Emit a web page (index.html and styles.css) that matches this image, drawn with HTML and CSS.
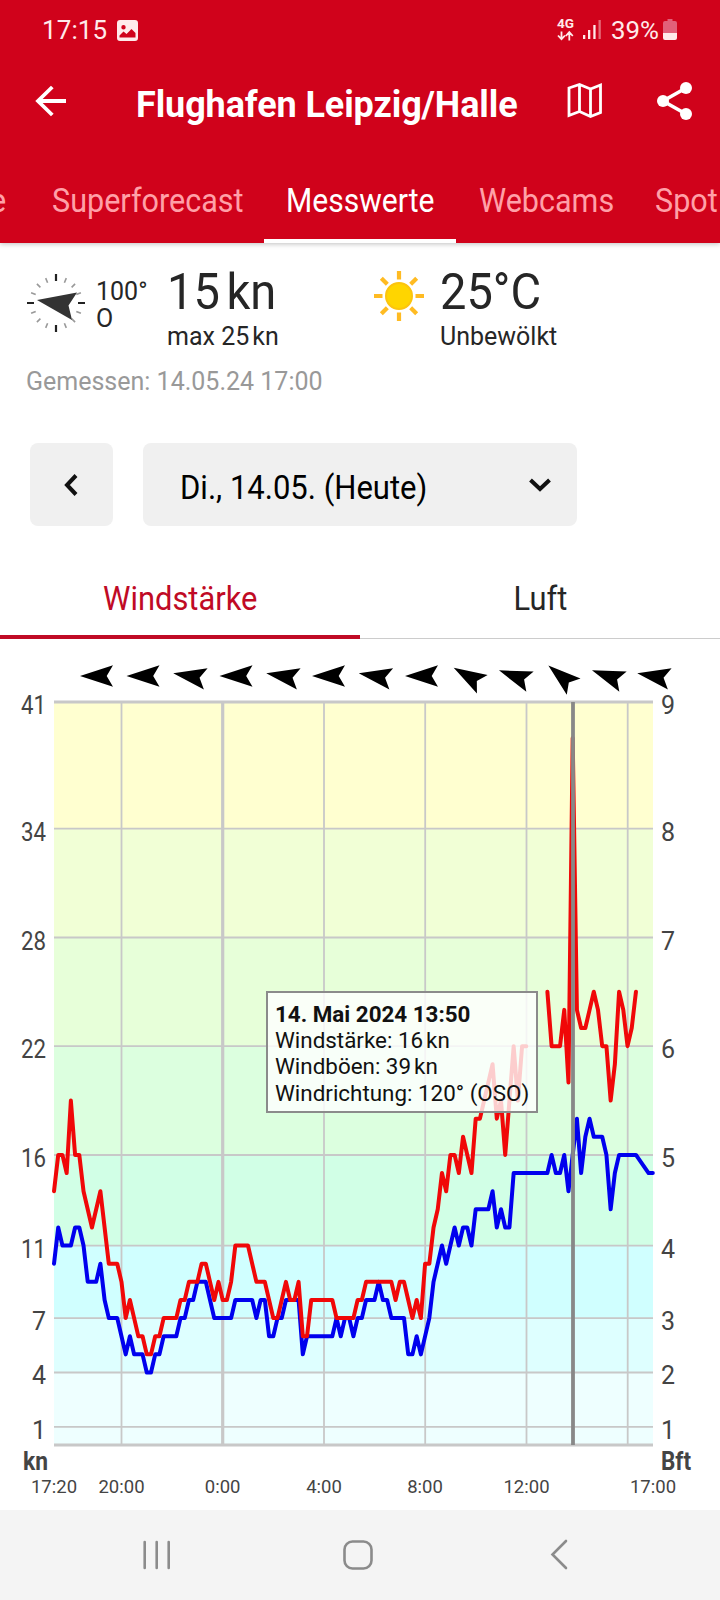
FILE: index.html
```html
<!DOCTYPE html>
<html lang="de">
<head>
<meta charset="utf-8">
<title>Flughafen Leipzig/Halle</title>
<link rel="stylesheet" href="styles.css">
</head>
<body>
<header class="header">
  <div class="status">
    <span class="clock">17:15</span>
    <svg class="photo" width="21" height="21" viewBox="0 0 21 21"><path fill="#ffeaea" fill-rule="evenodd" d="M3 0H18Q21 0 21 3V18Q21 21 18 21H3Q0 21 0 18V3Q0 0 3 0ZM6.500 5A2.200 2.200 0 1 0 6.500 9.400A2.200 2.200 0 1 0 6.500 5ZM2.500 17.500H18.500V13L14.500 9L9.500 14L6.500 11.500L2.500 15.500Z"/></svg>
    <svg class="signal" width="122" height="24" viewBox="0 0 122 24">
      <text class="net" x="0" y="9" textLength="17" lengthAdjust="spacingAndGlyphs">4G</text>
      <g fill="none" stroke="#ffeaea" stroke-width="1.800"><path d="M4.500 12.500V20M1 16.500L4.500 20.200L8 16.500M12.300 21.500V13.500M8.800 17L12.300 13.200L15.800 17"/></g>
      <g fill="#ffeaea"><rect x="26" y="16" width="2.300" height="4"/><rect x="31" y="11" width="2.300" height="9"/><rect x="36.300" y="6" width="2.300" height="14"/><rect x="41.500" y="1" width="2.300" height="19" opacity=".45"/></g>
      <text class="pct" x="54" y="19.500" textLength="48" lengthAdjust="spacingAndGlyphs">39%</text>
      <path fill="#e2607a" d="M110.500 0H115.500V2H118Q120 2 120 4V14H106V4Q106 2 108 2H110.500Z"/><path fill="#ffeaea" d="M106 14H120V19Q120 21 118 21H108Q106 21 106 19Z"/>
    </svg>
  </div>
  <div class="bar">
    <svg class="back" width="32" height="32" viewBox="0 0 32 32"><path d="M31 16H3M17.300 2L3 16L17.300 30" fill="none" stroke="#fff" stroke-width="3.800"/></svg>
    <h1 class="title">Flughafen Leipzig/Halle</h1>
    <svg class="map" width="36" height="36" viewBox="0 0 36 36"><path d="M2 5L12.500 1.500L23.500 6L33.500 2V29.500L23.500 33.500L12.500 28.500L2 32.500ZM12.500 1.500V28.500M23.500 6V33.500" fill="none" stroke="#fff" stroke-width="2.800"/></svg>
    <svg class="share" width="36" height="40" viewBox="0 0 36 40"><path d="M29 7L6 20L29 33" fill="none" stroke="#fff" stroke-width="3.600"/><g fill="#fff"><circle cx="29" cy="7" r="6"/><circle cx="6" cy="20" r="6"/><circle cx="29" cy="33" r="6"/></g></svg>
  </div>
  <nav class="tabs">
    <span class="tab cut">e</span><span class="tab super"><span class="narrow">Superforecast</span></span><span class="tab active"><span class="narrow mid">Messwerte</span></span><span class="tab cams"><span class="narrow">Webcams</span></span><span class="tab spot"><span class="narrow">Spot</span></span>
  </nav>
</header>
<main>
  <section class="current">
    <svg class="compass" width="58" height="60" viewBox="-29 -30 58 60">
      <g stroke="#222" stroke-width="2.200"><path d="M0-29V-22M0 22V29M-29 0H-22M22 0H29"/></g>
      <g stroke="#999" stroke-width="1.600"><path id="ticks" d="M8.400-20.300L10.300-24.900M15.600-15.600L19.100-19.100M20.300-8.400L24.900-10.300"/><use href="#ticks" transform="rotate(90)"/><use href="#ticks" transform="rotate(180)"/><use href="#ticks" transform="rotate(270)"/></g>
      <path fill="#333" d="M-19-3L21-10.500L12.500 2.500L16 17Z"/>
    </svg>
    <div class="direction">100°<br>O</div>
    <div class="reading wind"><strong class="value"><span class="narrow">15<i class="thin"></i>kn</span></strong><span class="note">max 25<i class="hair"></i>kn</span></div>
    <svg class="sun" width="52" height="52" viewBox="-26 -26 52 52"><g stroke="#fb2" stroke-width="4.200"><path id="ray" d="M0-16.500V-25M0 16.500V25M16.500 0H25M-16.500 0H-25"/><use href="#ray" transform="rotate(45)"/></g><circle r="13" fill="#ffd500" stroke="#fcc40e" stroke-width="2"/></svg>
    <div class="reading temp"><strong class="value"><span class="narrow">25°C</span></strong><span class="note">Unbewölkt</span></div>
  </section>
  <p class="measured">Gemessen: 14.05.24 17:00</p>
  <section class="picker">
    <button class="prev"><svg width="14" height="22" viewBox="0 0 14 22"><path d="M12 1.500L3 11L12 20.500" fill="none" stroke="#111" stroke-width="4"/></svg></button>
    <div class="date"><span class="date-text narrow">Di., 14.05. (Heute)</span><svg width="22" height="14" viewBox="0 0 22 14"><path d="M1.500 2L11 11L20.500 2" fill="none" stroke="#111" stroke-width="4"/></svg></div>
  </section>
  <nav class="switch"><span class="choice on"><span class="narrow center">Windstärke</span></span><span class="choice"><span class="narrow center">Luft</span></span></nav>
  <section class="chart">
    <svg width="720" height="870" viewBox="0 640 720 870">
      <defs><path id="a" d="M-16.500 0L16.500-10.700L10.200 0L16.500 10.700Z"/></defs>
      <g fill="#000">
        <use href="#a" transform="translate(96.500 676)"/><use href="#a" transform="translate(143 676)"/><use href="#a" transform="translate(189.500 676) rotate(10)"/><use href="#a" transform="translate(236 676)"/><use href="#a" transform="translate(282.500 676) rotate(10)"/><use href="#a" transform="translate(328.500 676)"/><use href="#a" transform="translate(375 676) rotate(10)"/><use href="#a" transform="translate(421.500 676)"/><use href="#a" transform="translate(468 676) rotate(30)"/><use href="#a" transform="translate(514.500 676) rotate(20)"/><use href="#a" transform="translate(561 676) rotate(40)"/><use href="#a" transform="translate(607.500 676) rotate(20)"/><use href="#a" transform="translate(653.500 676) rotate(10)"/>
      </g>
      <g>
        <rect x="54" y="702" width="599" height="127" fill="#ffffd0"/><rect x="54" y="829" width="599" height="109" fill="#f1ffd6"/><rect x="54" y="938" width="599" height="108" fill="#e7ffd9"/><rect x="54" y="1046" width="599" height="109" fill="#dcffdf"/><rect x="54" y="1155" width="599" height="91" fill="#d1ffe6"/><rect x="54" y="1246" width="599" height="72" fill="#d0ffff"/><rect x="54" y="1318" width="599" height="54" fill="#deffff"/><rect x="54" y="1372" width="599" height="73" fill="#eeffff"/>
      </g>
      <g stroke="#c8c8c8" stroke-width="1.800"><path d="M54 828.700H653M54 937.500H653M54 1046.200H653M54 1155H653M54 1245.600H653M54 1318.100H653M54 1372.500H653M54 1426.800H653M121.500 702V1445M324 702V1445M425.200 702V1445M526.500 702V1445M627.700 702V1445"/><path stroke-width="3.200" d="M54 702H653M54 1445H653M222.700 702V1445"/></g>
      <g transform="translate(54 1445) scale(4.217 -18.130)" fill="none" stroke-width="4" stroke-linejoin="round" stroke-linecap="round">
        <polyline class="line" stroke="#00e" points="0,10 1,12 2,11 4,11 5,12 6,12 7,11 8,9 10,9 11,10 12,8 13,7 15,7 16,6 17,5 18,6 19,5 21,5 22,4 23,4 24,5 25,5 26,6 29,6 30,7 31,7 32,8 33,8 34,9 36,9 37,8 38,7 42,7 43,8 47,8 48,7 49,8 50,8 51,6 52,6 53,7 54,7 55,8 58,8 59,5 60,6 66,6 67,7 68,6 69,7 70,7 71,6 72,7 73,7 74,8 76,8 77,9 78,8 79,8 80,7 83,7 84,5 85,5 86,6 87,5 89,7 90,9 91,10 92,11 93,10 94,11 95,12 96,11 97,12 98,12 99,11 100,13 103,13 104,14 105,12 106,13 107,12 108,12 109,15 117,15 118,16 119,15 120,15 121,16 122,14 123,16 124,18 125,15 126,17 127,18 128,17 130,17 131,16 132,13 133,15 134,16 138,16 141,15 142,15"/>
        <polyline class="line" stroke="#f00808" points="0,14 1,16 2,16 3,15 4,19 5,16 6,16 7,14 9,12 11,14 13,10 15,10 16,9 17,7 18,8 19,7 20,6 21,6 22,5 23,5 24,6 25,6 26,7 29,7 30,8 31,8 32,9 34,9 35,10 36,10 37,9 38,8 39,9 40,8 41,8 42,9 43,11 46,11 48,9 50,9 51,8 52,7 53,7 54,8 55,9 56,8 57,8 58,9 59,6 60,6 61,8 66,8 67,7 71,7 72,8 73,8 74,9 80,9 81,8 82,9 83,9 84,8 85,7 86,8 87,7 88,10 89,10 90,12 91,13 92,15 93,14 94,16 95,16 96,15 97,17 98,16 99,15 100,18 101,18 102,19 103,20 104,21 105,18 106,19 107,16 108,19 109,22 110,19 111,22 112,22"/>
        <polyline class="line" stroke="#f00808" points="117,25 118,22 120,22 121,24 122,20 123,39 124,24 125,23 126,23 127,24 128,25 129,24 130,22 131,22 132,19 133,21 134,25 135,24 136,22 137,23 138,25"/>
      </g>
      <path d="M573 702V1445" stroke="#888" stroke-width="3.800"/>
      <g class="axis narrow-end" text-anchor="end"><text x="46" y="713.500" textLength="25" lengthAdjust="spacingAndGlyphs">41</text><text x="46" y="840.500" textLength="25" lengthAdjust="spacingAndGlyphs">34</text><text x="46" y="949.500" textLength="25" lengthAdjust="spacingAndGlyphs">28</text><text x="46" y="1058" textLength="25" lengthAdjust="spacingAndGlyphs">22</text><text x="46" y="1166.500" textLength="25" lengthAdjust="spacingAndGlyphs">16</text><text x="46" y="1257.500" textLength="25" lengthAdjust="spacingAndGlyphs">11</text><text x="46" y="1330">7</text><text x="46" y="1384">4</text><text x="46" y="1438.500">1</text></g>
      <g class="axis"><text x="661" y="713.500">9</text><text x="661" y="840.500">8</text><text x="661" y="949.500">7</text><text x="661" y="1058">6</text><text x="661" y="1166.500">5</text><text x="661" y="1257.500">4</text><text x="661" y="1330">3</text><text x="661" y="1384">2</text><text x="661" y="1438.500">1</text></g>
      <text class="unit" x="23" y="1469.500" textLength="25" lengthAdjust="spacingAndGlyphs">kn</text><text class="unit" x="661" y="1469.500" textLength="30" lengthAdjust="spacingAndGlyphs">Bft</text>
      <g class="time" text-anchor="middle"><text x="54" y="1493">17:20</text><text x="121.500" y="1493">20:00</text><text x="222.700" y="1493">0:00</text><text x="324" y="1493">4:00</text><text x="425" y="1493">8:00</text><text x="526.500" y="1493">12:00</text><text x="653" y="1493">17:00</text></g>
    </svg>
    <div class="tooltip"><b>14. Mai 2024 13:50</b><br>Windstärke: 16<i class="hair"></i>kn<br>Windböen: 39<i class="hair"></i>kn<br>Windrichtung: 120° (OSO)</div>
  </section>
</main>
<footer class="system">
  <svg width="720" height="90" viewBox="0 1510 720 90"><g fill="none" stroke="#8b8b8b" stroke-width="2.600" stroke-linecap="round"><path d="M144.700 1542V1568M156.700 1542V1568M168.700 1542V1568"/><rect x="344.500" y="1541.500" width="27" height="27" rx="8"/><path d="M566 1541L552.500 1554.500L566 1568"/></g></svg>
</footer>
</body>
</html>
```
FILE: styles.css
```css
* { box-sizing: border-box; }
body { margin: 0; width: 720px; height: 1600px; overflow: hidden; background: #fff; color: #262626; font-family: Roboto, "Noto Sans", sans-serif; }
svg { display: block; flex: none; overflow: visible; }
.narrow { display: inline-block; transform: scaleX(.94); transform-origin: left center; }
.mid { transform: scaleX(.925); transform-origin: center; }
.center { transform: scaleX(.95); transform-origin: center; }
.header { height: 243px; background: #d0021b; color: #fff; display: flex; flex-direction: column; box-shadow: 0 1px 5px rgba(0,0,0,.25); }
.status { height: 60px; padding: 0 41px 0 42px; display: flex; align-items: center; color: #ffeaea; }
.clock { font-size: 26px; letter-spacing: .1px; width: 75px; margin-top: -1px; }
.signal { margin-left: auto; margin-top: 2px; }
.net { font-size: 13px; font-weight: 700; fill: #ffeaea; }
.pct { font-size: 26.5px; fill: #ffeaea; }
.bar { height: 82px; padding-left: 35px; display: flex; align-items: center; }
.title { margin: 8px 0 0 69px; width: 384px; font-size: 36px; line-height: 42px; font-weight: 700; letter-spacing: -.1px; white-space: nowrap; }
.map { margin-left: 47px; }
.share { margin-left: 54px; }
.tabs { height: 101px; display: flex; overflow: hidden; font-size: 32.5px; line-height: 38px; white-space: nowrap; color: #ffa0a8; }
.tab { padding-top: 40px; flex: none; }
.cut { width: 24px; margin-left: -11px; }
.super { width: 251px; padding-left: 39px; }
.active { width: 192px; text-align: center; color: #fff; border-bottom: 4px solid #fff; }
.cams { width: 176px; padding-left: 23px; }
.spot { padding-left: 23px; }
.current { height: 118px; padding-left: 27px; display: flex; align-items: flex-start; }
.compass { margin-top: 30px; }
.direction { width: 71px; margin: 35px 0 0 11px; font-size: 25px; line-height: 27px; }
.reading { display: flex; flex-direction: column; white-space: nowrap; }
.wind { width: 206px; }
.value { font-size: 50px; line-height: 62px; font-weight: 400; }
.note { font-size: 25px; line-height: 28px; }
.thin { display: inline-block; width: 7px; }
.hair { display: inline-block; width: 3px; }
.sun { margin-top: 27px; }
.wind { margin: 18px 0 0; }
.temp { margin: 18px 0 0 15px; }
.measured { height: 40px; margin: 6px 0 0; padding-left: 26px; font-size: 25px; line-height: 30px; color: #999; }
.picker { height: 84px; margin-top: 36px; padding-left: 30px; display: flex; gap: 30px; }
.prev { width: 83px; height: 83px; padding-right: 7px; border: 0; border-radius: 8px; background: #f0f0f0; display: grid; place-items: center; }
.date { width: 434px; height: 83px; padding: 0 26px 0 37px; border-radius: 8px; background: #f0f0f0; color: #000; display: flex; align-items: center; justify-content: space-between; }
.date-text { font-size: 33px; margin-top: 5px; white-space: nowrap; }
.switch { height: 113px; padding-bottom: 1px; display: grid; grid-template-columns: 1fr 1fr; font-size: 32.5px; line-height: 38px; text-align: center; }
.choice { padding-top: 53px; border-bottom: 1.5px solid #ccc; }
.on { color: #c00a25; border-bottom: 4px solid #c00a25; }
.chart { position: relative; height: 870px; }
.axis { font-size: 25px; fill: #444; }
.unit { font-size: 25px; font-weight: 700; fill: #444; }
.time { font-size: 18.5px; fill: #444; }
.line { vector-effect: non-scaling-stroke; }
.tooltip { position: absolute; left: 266px; top: 351px; width: 272px; height: 122px; padding: 8px 0 0 7px; border: 2px solid #8b8b8b; background: rgba(255,255,255,.8); color: #111; font-size: 22.4px; line-height: 26.2px; white-space: nowrap; }
.system { height: 90px; background: #f4f4f4; }
```
